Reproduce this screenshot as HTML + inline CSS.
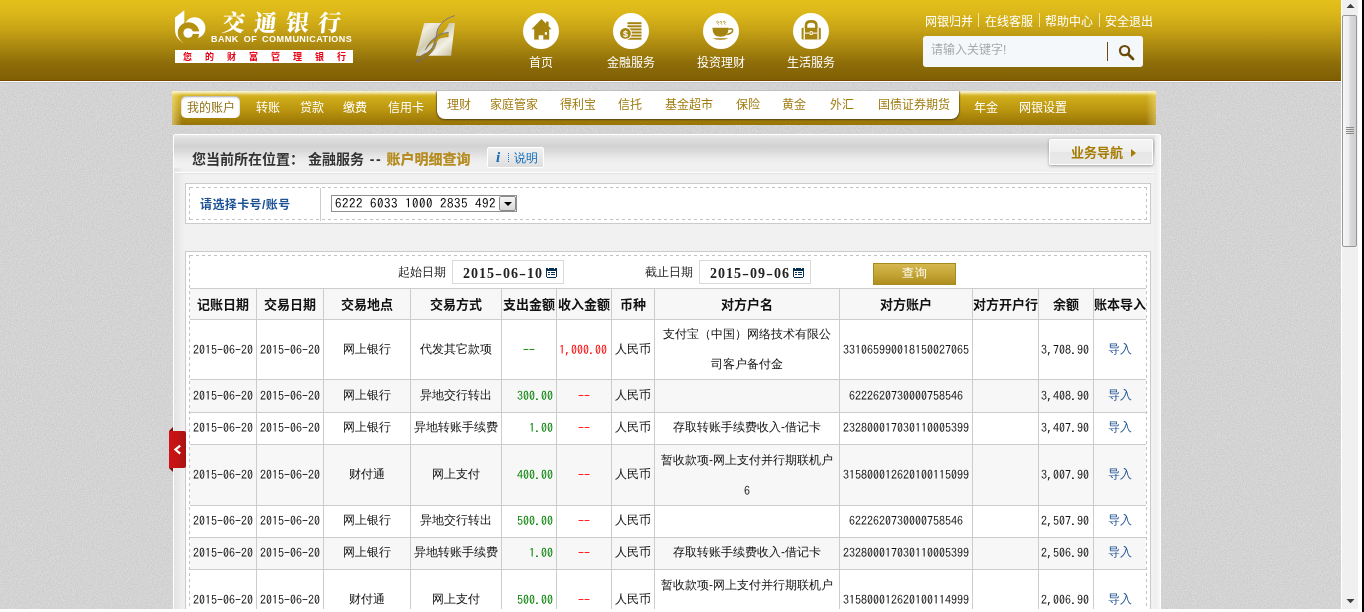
<!DOCTYPE html>
<html lang="zh-CN">
<head>
<meta charset="utf-8">
<title>交通银行 - 账户明细查询</title>
<style>
*{box-sizing:border-box;margin:0;padding:0}
html,body{width:1364px;height:612px;overflow:hidden;background:#fff}
body{position:relative;font-family:"Liberation Sans","Noto Sans CJK SC",sans-serif;font-size:12px;color:#000}
.abs{position:absolute}
#page{position:absolute;left:0;top:0;width:1341px;height:609px;overflow:hidden;background:#d3d3d3;will-change:transform}
/* header */
#hdr{position:absolute;left:0;top:0;width:1341px;height:81px;background:linear-gradient(#e3c01a 0,#dcb81a 12px,#c9a516 28px,#a8860f 48px,#8d6c09 64px,#7e5f03 80px,#734a00 80px,#734a00 81px)}
#hdrline{position:absolute;left:0;top:81px;width:1341px;height:2px;background:linear-gradient(#fff 0,#fff 1px,#c6c6c6 1px,#c6c6c6 2px)}
.yh{font-family:"Liberation Sans","Noto Sans CJK SC",sans-serif}
.ss{font-family:"Liberation Sans","WenQuanYi Zen Hei","Noto Sans CJK SC",sans-serif}
.t{position:absolute;white-space:nowrap;line-height:14px;height:14px}
.w{color:#fff}

/* logo */
#logotxt{position:absolute;left:222px;top:8px;font-family:"Liberation Serif","Noto Serif CJK SC",serif;font-weight:900;font-size:23px;line-height:32px;letter-spacing:9px;color:#fff;white-space:nowrap;transform:skewX(-6deg)}
#logoen{position:absolute;left:211px;top:34px;font-family:"Liberation Sans",sans-serif;font-weight:bold;font-size:9px;line-height:10px;color:#fff;white-space:nowrap;letter-spacing:0.45px;word-spacing:2px}
#slogan{position:absolute;left:175px;top:50px;width:178px;height:13px;background:#fff;color:#e60012;font-size:9px;line-height:15px;font-weight:bold;white-space:nowrap;letter-spacing:13px;padding-left:8px;overflow:hidden}
.circ{position:absolute;top:13px;width:36px;height:36px;border-radius:50%;background:#fff}
.circ svg{position:absolute;left:0;top:0}
.navl{position:absolute;top:56px;width:90px;text-align:center;color:#fff;font-size:12px;line-height:14px;white-space:nowrap}
.tl{position:absolute;top:15px;color:#fff;font-size:12px;line-height:14px;white-space:nowrap}
.tsep{position:absolute;top:13px;width:1px;height:14px;background:#f3e6a6}
#search{position:absolute;left:923px;top:36px;width:220px;height:31px;border-radius:3px;background:#f4f8fb}
#search .ph{position:absolute;left:8px;top:7px;color:#a9a9a9;font-size:12px;line-height:14px}
#search .bar{position:absolute;left:184px;top:6px;width:1px;height:19px;background:#6b4a0a}

/* subnav */
#snav{position:absolute;left:172px;top:91px;width:984px;height:34px;background:linear-gradient(#f7f0d0 0,#f5ecc2 1px,#efe09c 2px,#e3cc60 3px,#d8bb34 4px,#cead1a 6px,#cba717 9px,#b8930f 20px,#a07c08 30px,#97740a 34px);}
#snav .fadeL{position:absolute;left:0;top:0;width:10px;height:34px;background:linear-gradient(90deg,rgba(255,240,170,.55),rgba(255,240,170,0))}
#snav .fadeR{position:absolute;right:0;top:0;width:10px;height:34px;background:linear-gradient(270deg,rgba(255,240,170,.45),rgba(255,240,170,0))}
#pill{position:absolute;left:9px;top:5px;width:59px;height:22px;border-radius:5px;background:#fff;box-shadow:inset 0 1px 2px rgba(0,0,0,.35)}
#wtab{position:absolute;left:265px;top:0;width:522px;height:28px;background:#fff;border-radius:0 0 8px 8px;box-shadow:0 1px 2px rgba(60,50,20,.75),-1px 0 1px rgba(60,50,20,.35),1px 0 1px rgba(60,50,20,.35)}
.sn{position:absolute;top:10px;font-size:12px;line-height:14px;white-space:nowrap;color:#fff}
.sg{position:absolute;top:7px;font-size:12px;line-height:14px;white-space:nowrap;color:#a07c10}

/* panel */
#panel{position:absolute;left:173px;top:134px;width:988px;height:500px;border:1px solid #fff;border-radius:2px 2px 0 0;background:#f1f1f1;overflow:hidden}
#phead{position:absolute;left:0;top:0;width:986px;height:37px;background:linear-gradient(#e9e9e9 0,#dedede 4px,#d2d2d2 11px,#dcdcdc 17px,#ebebeb 24px,#f0f0f0 30px,#f0f0f0 37px)}
#pl{position:absolute;left:0;top:33px;width:11px;height:470px;background:linear-gradient(90deg,#e3e3e3,#f1f1f1)}
#pr{position:absolute;right:0;top:0;width:5px;height:500px;background:linear-gradient(90deg,#ececec,#f8f8f8)}
#pline{position:absolute;left:1px;top:37px;width:980px;height:2px;background:linear-gradient(#fff 0,#fff 50%,#e2e2e2 50%,#e2e2e2 100%)}
#crumb{position:absolute;left:18px;top:16px;font-size:14px;line-height:16px;font-weight:bold;color:#333;white-space:nowrap}
#crumb b{color:#b58d22}
#crumb s{text-decoration:none;letter-spacing:1.5px;margin:0 0.5px 0 2px}
#tip{position:absolute;left:313px;top:12px;width:57px;height:21px;border:1px solid #fff;border-radius:2px;background:linear-gradient(#f1f1f1,#dedede)}
#bnav{position:absolute;left:875px;top:4px;width:104px;height:26px;border:1px solid #fff;border-radius:2px;background:linear-gradient(#f5f5f5 0,#efefef 50%,#e6e6e6 51%,#e9e9e9 100%);box-shadow:0 1px 3px rgba(0,0,0,.35)}
#bnav span{position:absolute;left:21px;top:5px;font-size:13px;line-height:15px;font-weight:bold;color:#a67c00;white-space:nowrap}
#bnav i{position:absolute;left:81px;top:9px;width:0;height:0;border-left:5px solid #a67c00;border-top:4px solid transparent;border-bottom:4px solid transparent}
.box{position:absolute;left:11px;width:966px;border:1px solid #cbcbcb;background:#fff}
.dash{position:absolute;left:3px;top:3px;border:1px solid transparent;box-sizing:border-box}
.dash:before{content:"";position:absolute;left:-1px;top:-1px;right:-1px;bottom:-1px;
background:linear-gradient(90deg,#c2c2c2 3px,transparent 3px) 1px 0/6px 1px repeat-x,
linear-gradient(90deg,#c2c2c2 3px,transparent 3px) 1px 100%/6px 1px repeat-x,
linear-gradient(180deg,#c2c2c2 3px,transparent 3px) 0 0/1px 6px repeat-y,
linear-gradient(180deg,#c2c2c2 3px,transparent 3px) 100% 0/1px 6px repeat-y}

.ssf{font-family:"Liberation Sans","WenQuanYi Zen Hei","Noto Sans CJK SC",sans-serif}
.num{font-family:"IPAGothic","Liberation Mono",monospace}
#b1lab{position:absolute;left:14px;top:14px;font-size:12px;line-height:14px;font-weight:bold;color:#1d5394;white-space:nowrap;letter-spacing:.4px}
#b1div{position:absolute;left:134px;top:4px;width:1px;height:33px;background:#ccc}
#sel{position:absolute;left:145px;top:11px;width:186px;height:17px;border:1px solid #8f8f8f;background:#fff}
#sel span{position:absolute;left:3px;top:0;font-size:13px;letter-spacing:.5px;line-height:16px;white-space:pre;color:#000}
#sel i{position:absolute;right:0;top:0;width:17px;height:15px;border:1px solid #8a8a8a;border-radius:2px;background:linear-gradient(#f6f6f6,#d8d8d8)}
#sel i:after{content:"";position:absolute;left:3.5px;top:5px;border-top:4px solid #000;border-left:4px solid transparent;border-right:4px solid transparent}
/* query area */
.ql{position:absolute;top:13px;font-size:12px;line-height:14px;white-space:nowrap;color:#222}
.qd{position:absolute;top:8px;width:112px;height:24px;border:1px solid #d9d9d9;background:#fff}
.qd span{position:absolute;left:10px;top:5px;font-family:"Liberation Serif",serif;font-weight:bold;font-size:14px;line-height:16px;letter-spacing:1px;color:#222;white-space:nowrap}
.qd u{display:inline-block;text-decoration:none;width:7px;text-align:center;transform:scaleX(1.5);letter-spacing:0;margin-right:1px}
.qd svg{position:absolute;left:93px;top:7px}
#qbtn{position:absolute;left:687px;top:11px;width:83px;height:22px;border:1px solid #a88a1c;background:linear-gradient(#d5b750 0,#c4a535 50%,#ad8e1e 100%);color:#fff;font-size:12px;line-height:19px;text-align:center;letter-spacing:1px;padding-left:1px;font-family:"Liberation Sans","WenQuanYi Zen Hei",sans-serif}
/* table */
#tb{position:absolute;left:4px;top:36px;width:956px;height:360px;font-size:12px;overflow:hidden}
#tb .hl{position:absolute;left:0;width:956px;height:1px;background:#ccc}
#tb .vl{position:absolute;top:0;width:1px;height:360px;background:#ccc}
#tb .bg{position:absolute;left:0;width:956px;background:#f7f7f7}
#tb .c{position:absolute;margin-top:-1px;text-align:center;white-space:nowrap;line-height:30px;color:#111}
#tb .h{font-family:"Liberation Sans","Noto Sans CJK SC",sans-serif;font-weight:bold;font-size:13px;color:#111;line-height:31px;margin-top:0}
#tb .g{color:#008000}#tb .r{color:#ff0000}#tb .a{color:#1c4f91}

#rtab{position:absolute;left:169px;top:431px;width:17px;height:37px;background:linear-gradient(90deg,#cf1212,#c11313 50%,#a51515);border-radius:0 2px 2px 0}
#rtabt{position:absolute;left:169px;top:427px;width:0;height:0;border-bottom:4px solid #7e0c0c;border-left:4px solid transparent}
#rtabb{position:absolute;left:169px;top:468px;width:0;height:0;border-top:4px solid #7e0c0c;border-left:4px solid transparent}
#tip b{position:absolute;left:8px;top:1px;font-family:"Liberation Serif",serif;font-style:italic;font-weight:bold;font-size:15px;line-height:17px;color:#1268b3}
#tip i{position:absolute;left:19.5px;top:5px;width:1px;height:10px;background:repeating-linear-gradient(#1a78c8 0,#1a78c8 1px,transparent 1px,transparent 2px)}
#tip span{position:absolute;left:26px;top:3px;font-size:12px;line-height:14px;color:#0b6bbb;white-space:nowrap}
/* scrollbar */
#sb{position:absolute;left:1341px;top:0;width:23px;height:612px;background:#fff}
#sbtrack{position:absolute;left:1px;top:0;width:16px;height:609px;background:#f0f0f0}
#sbthumb{position:absolute;left:1px;top:15px;width:15px;height:232px;border:1px solid #979797;border-radius:2px;background:linear-gradient(90deg,#f6f6f6 0,#ededee 45%,#d9d9dc 55%,#cfcfd3 100%)}
#sbblack{position:absolute;left:21px;top:0;width:2px;height:612px;background:#000}
</style>
</head>
<body>
<div id="page">
  <div id="hdr"></div>
  <div id="hdrline"></div>

  <svg class="abs" style="left:0;top:83px" width="1341" height="526"><filter id="nz" x="0" y="0" width="100%" height="100%" color-interpolation-filters="sRGB"><feTurbulence type="fractalNoise" baseFrequency="0.8" numOctaves="2" seed="3"/><feColorMatrix type="matrix" values="0.11 0 0 0 0.773  0.11 0 0 0 0.773  0.11 0 0 0 0.773  0 0 0 0 1"/></filter><rect width="1341" height="526" filter="url(#nz)"/></svg>
  <!-- logo -->
  <svg class="abs" style="left:172px;top:8px" width="36" height="36" viewBox="0 0 36 36">
    <path d="M3,9.6 L12.3,2.2 L12.3,15 L6,26 L11.2,34.8 Q3,30.5 3,22 Z" fill="#fff"/>
    <circle cx="22.7" cy="20" r="10.7" fill="#fff"/>
    <path d="M5.7,25 A10.8,10.8 0 0 1 27.3,25 A10.8,10.8 0 0 1 24.5,32.3 L11.2,34.8 Q5.7,31 5.7,25 Z" fill="#b3910f"/>
    <circle cx="16.2" cy="25" r="4.8" fill="#fff"/>
    <rect x="18" y="23.4" width="10" height="2.6" fill="#fff"/>
  </svg>
  <div id="logotxt">交通银行</div>
  <div id="logoen">BANK OF COMMUNICATIONS</div>
  <div id="slogan">您的财富管理银行</div>
  <!-- centre emblem -->
  <svg class="abs" style="left:408px;top:8px" width="60" height="60" viewBox="0 0 60 60">
    <defs>
      <linearGradient id="sg" x1="0" y1="0" x2="1" y2="1">
        <stop offset="0" stop-color="#cfc8a8"/><stop offset="0.22" stop-color="#f1eedf"/><stop offset="0.45" stop-color="#d2ccb0"/><stop offset="0.7" stop-color="#f3f1e4"/><stop offset="1" stop-color="#bdb591"/></linearGradient>
      <mask id="sm"><rect width="60" height="60" fill="#fff"/>
        <path d="M46.6,7.6 C45.17,8.25 40.37,9.98 38,11.5 C35.63,13.02 33.83,14.95 32.4,16.7 C30.97,18.45 30.07,20.20 29.4,22 C28.73,23.80 28.88,25.58 28.4,27.5 C27.92,29.42 27.15,31.55 26.5,33.5 C25.85,35.45 25.58,37.45 24.5,39.2 C23.42,40.95 21.80,42.62 20,44 C18.20,45.38 15.73,45.83 13.7,47.5 C11.67,49.17 8.78,52.92 7.8,54 L7.8,54.4 C9.00,53.87 12.72,52.52 15,51.2 C17.28,49.88 19.67,48.20 21.5,46.5 C23.33,44.80 24.83,42.92 26,41 C27.17,39.08 27.58,36.87 28.5,35 C29.42,33.13 30.33,31.63 31.5,29.8 C32.67,27.97 34.25,25.70 35.5,24 C36.75,22.30 38.00,21.18 39,19.6 C40.00,18.02 40.23,16.40 41.5,14.5 C42.77,12.60 45.75,9.25 46.6,8.2 Z" fill="#000"/>
        <path d="M40.7,24.3 C39.42,24.58 35.20,25.13 33,26 C30.80,26.87 29.40,28.07 27.5,29.5 C25.60,30.93 23.32,32.48 21.6,34.6 C19.88,36.72 17.93,40.93 17.2,42.2 L17.2,42.2 C18.05,41.27 20.58,38.17 22.3,36.6 C24.02,35.03 25.63,33.90 27.5,32.8 C29.37,31.70 31.33,30.65 33.5,30 C35.67,29.35 39.33,29.08 40.5,28.9 Z" fill="#000"/>
      </mask>
    </defs>
    <path d="M16.2,14.9 L46.9,14.9 L43.1,47.8 L7.8,47.8 Z" fill="url(#sg)" mask="url(#sm)"/>
    <g fill="none" stroke="#62659c" stroke-width="0.8">
      <path d="M46.6,7.6 C45.17,8.25 40.37,9.98 38,11.5 C35.63,13.02 33.83,14.95 32.4,16.7 C30.97,18.45 30.07,20.20 29.4,22 C28.73,23.80 28.88,25.58 28.4,27.5 C27.92,29.42 27.15,31.55 26.5,33.5 C25.85,35.45 25.58,37.45 24.5,39.2 C23.42,40.95 21.80,42.62 20,44 C18.20,45.38 15.73,45.83 13.7,47.5 C11.67,49.17 8.78,52.92 7.8,54"/>
      <path d="M40.7,24.3 C39.42,24.58 35.20,25.13 33,26 C30.80,26.87 29.40,28.07 27.5,29.5 C25.60,30.93 23.32,32.48 21.6,34.6 C19.88,36.72 17.93,40.93 17.2,42.2"/>
      <path d="M7.8,54.4 C9.00,53.87 12.72,52.52 15,51.2 C17.28,49.88 19.67,48.20 21.5,46.5 C23.33,44.80 24.83,42.92 26,41 C27.17,39.08 28.08,36.00 28.5,35" stroke-width="0.6"/>
    </g>
  </svg>
  <!-- main nav icons -->
  <div class="circ" style="left:523px"><svg width="36" height="36" viewBox="0 0 36 36"><g fill="#a5840f"><path d="M18.5,6 L28.6,16.2 L8.4,16.2 Z"/><rect x="23" y="8.6" width="2.6" height="5"/><rect x="11.2" y="16" width="15" height="10.6"/></g><rect x="15.7" y="22.3" width="4.6" height="4.5" fill="#fff"/><rect x="21.8" y="19.2" width="2.2" height="2.5" fill="#fff"/></svg></div>
  <div class="circ" style="left:613px"><svg width="36" height="36" viewBox="0 0 36 36"><g fill="#a5840f"><rect x="14.5" y="9.2" width="14" height="2"/><rect x="14.5" y="12.3" width="14" height="2"/><rect x="14.5" y="15.4" width="14" height="2"/><rect x="14.5" y="18.5" width="14" height="2"/><rect x="14.5" y="21.6" width="14" height="2"/><rect x="14.5" y="24.7" width="14" height="2"/></g><circle cx="12.4" cy="20.4" r="6.4" fill="#fff"/><circle cx="12.4" cy="20.4" r="5.4" fill="#a5840f"/><text x="12.4" y="23.6" font-family="Liberation Sans,sans-serif" font-size="9" font-weight="bold" fill="#fff" text-anchor="middle">$</text></svg></div>
  <div class="circ" style="left:703px"><svg width="36" height="36" viewBox="0 0 36 36"><g fill="#a5840f"><path d="M9.4,14.8 L25.6,14.8 Q25.6,23.8 17.5,23.8 Q9.4,23.8 9.4,14.8 Z"/><path d="M9.5,25.2 L25.5,25.2 Q22,26.8 17.5,26.8 Q13,26.8 9.5,25.2 Z"/></g><path d="M25.2,16.2 Q30.4,15 29.6,18 Q28.8,20.6 23.6,21.6" fill="none" stroke="#a5840f" stroke-width="1.5"/><path d="M13.2,9 q1.4,-1.4 2.4,0 q-2,1.6 0,2.6 M16.6,9 q1.4,-1.4 2.4,0 q-2,1.6 0,2.6 M20,9 q1.4,-1.4 2.4,0 q-2,1.6 0,2.6" fill="none" stroke="#a5840f" stroke-width="0.8"/></svg></div>
  <div class="circ" style="left:793px"><svg width="36" height="36" viewBox="0 0 36 36"><path d="M13,15 L13,12.4 Q13,8.4 18.2,8.4 Q23.4,8.4 23.4,12.4 L23.4,15" fill="none" stroke="#a5840f" stroke-width="2.6"/><rect x="8.6" y="14.8" width="19.2" height="11.8" rx="1" fill="#a5840f"/><rect x="10.6" y="14.8" width="1.3" height="11.8" fill="#fff"/><rect x="24.4" y="14.8" width="1.3" height="11.8" fill="#fff"/><rect x="12" y="19.6" width="12.4" height="1" fill="#fff"/><rect x="16.8" y="18.2" width="2.8" height="3.8" fill="#fff"/><rect x="17.6" y="19" width="1.2" height="2.2" fill="#a5840f"/></svg></div>
  <div class="navl" style="left:496px">首页</div>
  <div class="navl" style="left:586px">金融服务</div>
  <div class="navl" style="left:676px">投资理财</div>
  <div class="navl" style="left:766px">生活服务</div>
  <!-- top links -->
  <div class="tl" style="left:925px">网银归并</div><div class="tsep" style="left:978px"></div>
  <div class="tl" style="left:985px">在线客服</div><div class="tsep" style="left:1039px"></div>
  <div class="tl" style="left:1045px">帮助中心</div><div class="tsep" style="left:1099px"></div>
  <div class="tl" style="left:1105px">安全退出</div>
  <div id="search"><div class="ph">请输入关键字!</div><div class="bar"></div>
    <svg class="abs" style="left:195px;top:8px" width="17" height="17" viewBox="0 0 17 17"><circle cx="6.6" cy="6.6" r="4.6" fill="none" stroke="#6b4a0a" stroke-width="2.2"/><path d="M10,10 L15,15" stroke="#6b4a0a" stroke-width="2.8" stroke-linecap="round"/></svg>
  </div>

  <!-- sub navigation -->
  <div id="snav"><div class="fadeL"></div><div class="fadeR"></div>
    <div id="pill"></div>
    <div class="sn" style="left:15px;color:#8f7012">我的账户</div>
    <div class="sn" style="left:84px">转账</div>
    <div class="sn" style="left:128px">贷款</div>
    <div class="sn" style="left:171px">缴费</div>
    <div class="sn" style="left:216px">信用卡</div>
    <div id="wtab"></div>
    <div class="sg" style="left:275px">理财</div>
    <div class="sg" style="left:318px">家庭管家</div>
    <div class="sg" style="left:388px">得利宝</div>
    <div class="sg" style="left:446px">信托</div>
    <div class="sg" style="left:493px">基金超市</div>
    <div class="sg" style="left:564px">保险</div>
    <div class="sg" style="left:610px">黄金</div>
    <div class="sg" style="left:658px">外汇</div>
    <div class="sg" style="left:706px">国债证券期货</div>
    <div class="sn" style="left:802px">年金</div>
    <div class="sn" style="left:847px">网银设置</div>
  </div>

  <!-- content panel -->
  <div id="panel">
    <div id="phead"></div><div id="pl"></div><div id="pr"></div><div id="pline"></div>
    <div id="crumb">您当前所在位置： 金融服务 <s>--</s> <b>账户明细查询</b></div>
    <div id="tip"><b>i</b><i></i><span class="ssf">说明</span></div>
    <div id="bnav"><span>业务导航</span><i></i></div>
    <div class="box" id="box1" style="top:48px;height:41px"><div class="dash" style="width:958px;height:33px"></div>
      <div id="b1lab">请选择卡号/账号</div><div id="b1div"></div>
      <div id="sel"><span class="num">6222 6033 1000 2835 492</span><i></i></div>
    </div>
    <div class="box" id="box2" style="top:116px;height:400px"><div class="dash" style="width:958px;height:400px"></div>
      <div class="ql ssf" style="left:212px">起始日期</div>
      <div class="qd" style="left:266px"><span>2015<u>-</u>06<u>-</u>10</span><svg width="11" height="10" viewBox="0 0 11 10" shape-rendering="crispEdges"><rect width="11" height="9" fill="#06304f"/><rect x="1" y="9" width="9" height="1" fill="#06304f"/><rect x="1" y="3" width="9" height="6" fill="#fff"/><rect x="2" y="0" width="1" height="1" fill="#fff"/><rect x="8" y="0" width="1" height="1" fill="#fff"/><g fill="#06304f"><rect x="2" y="4" width="2" height="1"/><rect x="5" y="4" width="4" height="1"/><rect x="2" y="6" width="2" height="1"/><rect x="5" y="6" width="4" height="1"/></g></svg></div>
      <div class="ql ssf" style="left:459px">截止日期</div>
      <div class="qd" style="left:513px"><span>2015<u>-</u>09<u>-</u>06</span><svg width="11" height="10" viewBox="0 0 11 10" shape-rendering="crispEdges"><rect width="11" height="9" fill="#06304f"/><rect x="1" y="9" width="9" height="1" fill="#06304f"/><rect x="1" y="3" width="9" height="6" fill="#fff"/><rect x="2" y="0" width="1" height="1" fill="#fff"/><rect x="8" y="0" width="1" height="1" fill="#fff"/><g fill="#06304f"><rect x="2" y="4" width="2" height="1"/><rect x="5" y="4" width="4" height="1"/><rect x="2" y="6" width="2" height="1"/><rect x="5" y="6" width="4" height="1"/></g></svg></div>
      <div id="qbtn">查询</div>
      <div id="tb">
      <div class="bg" style="top:1px;height:30px"></div>
      <div class="bg" style="top:92px;height:32px"></div>
      <div class="bg" style="top:157px;height:60px"></div>
      <div class="bg" style="top:250px;height:31px"></div>
      <div class="hl" style="top:0px"></div>
      <div class="hl" style="top:31px"></div>
      <div class="hl" style="top:91px"></div>
      <div class="hl" style="top:124px"></div>
      <div class="hl" style="top:156px"></div>
      <div class="hl" style="top:217px"></div>
      <div class="hl" style="top:249px"></div>
      <div class="hl" style="top:281px"></div>
      <div class="hl" style="top:342px"></div>
      <div class="vl" style="left:66px"></div>
      <div class="vl" style="left:133px"></div>
      <div class="vl" style="left:220px"></div>
      <div class="vl" style="left:311px"></div>
      <div class="vl" style="left:366px"></div>
      <div class="vl" style="left:421px"></div>
      <div class="vl" style="left:464px"></div>
      <div class="vl" style="left:649px"></div>
      <div class="vl" style="left:782px"></div>
      <div class="vl" style="left:848px"></div>
      <div class="vl" style="left:903px"></div>
      <div class="c h" style="left:0px;top:1px;width:66px;height:30px;">记账日期</div>
      <div class="c h" style="left:67px;top:1px;width:66px;height:30px;">交易日期</div>
      <div class="c h" style="left:134px;top:1px;width:86px;height:30px;">交易地点</div>
      <div class="c h" style="left:221px;top:1px;width:90px;height:30px;">交易方式</div>
      <div class="c h" style="left:312px;top:1px;width:54px;height:30px;">支出金额</div>
      <div class="c h" style="left:367px;top:1px;width:54px;height:30px;">收入金额</div>
      <div class="c h" style="left:422px;top:1px;width:42px;height:30px;">币种</div>
      <div class="c h" style="left:465px;top:1px;width:184px;height:30px;">对方户名</div>
      <div class="c h" style="left:650px;top:1px;width:132px;height:30px;">对方账户</div>
      <div class="c h" style="left:783px;top:1px;width:65px;height:30px;">对方开户行</div>
      <div class="c h" style="left:849px;top:1px;width:54px;height:30px;">余额</div>
      <div class="c h" style="left:904px;top:1px;width:52px;height:30px;">账本导入</div>
      <div class="c num" style="left:0px;top:32px;width:66px;height:60px;line-height:60px;">2015-06-20</div>
      <div class="c num" style="left:67px;top:32px;width:66px;height:60px;line-height:60px;">2015-06-20</div>
      <div class="c ssf" style="left:134px;top:32px;width:86px;height:60px;line-height:60px;">网上银行</div>
      <div class="c ssf" style="left:221px;top:32px;width:90px;height:60px;line-height:60px;">代发其它款项</div>
      <div class="c num g" style="left:312px;top:32px;width:54px;height:60px;line-height:60px;">--</div>
      <div class="c num r" style="left:367px;top:32px;width:54px;height:60px;line-height:60px;text-align:right;padding-right:4px;">1,000.00</div>
      <div class="c ssf" style="left:422px;top:32px;width:42px;height:60px;line-height:60px;">人民币</div>
      <div class="c ssf" style="left:465px;top:32px;width:184px;height:30px;">支付宝（中国）网络技术有限公</div>
      <div class="c ssf" style="left:465px;top:62px;width:184px;height:30px;">司客户备付金</div>
      <div class="c num" style="left:650px;top:32px;width:132px;height:60px;line-height:60px;">331065990018150027065</div>
      <div class="c num" style="left:849px;top:32px;width:54px;height:60px;line-height:60px;text-align:right;padding-right:4px;">3,708.90</div>
      <div class="c ssf a" style="left:904px;top:32px;width:52px;height:60px;line-height:60px;">导入</div>
      <div class="c num" style="left:0px;top:93px;width:66px;height:31px;line-height:31px;">2015-06-20</div>
      <div class="c num" style="left:67px;top:93px;width:66px;height:31px;line-height:31px;">2015-06-20</div>
      <div class="c ssf" style="left:134px;top:93px;width:86px;height:31px;line-height:31px;">网上银行</div>
      <div class="c ssf" style="left:221px;top:93px;width:90px;height:31px;line-height:31px;">异地交行转出</div>
      <div class="c num g" style="left:312px;top:93px;width:54px;height:31px;line-height:31px;text-align:right;padding-right:3px;">300.00</div>
      <div class="c num r" style="left:367px;top:93px;width:54px;height:31px;line-height:31px;">--</div>
      <div class="c ssf" style="left:422px;top:93px;width:42px;height:31px;line-height:31px;">人民币</div>
      <div class="c ssf" style="left:465px;top:93px;width:184px;height:31px;line-height:31px;"></div>
      <div class="c num" style="left:650px;top:93px;width:132px;height:31px;line-height:31px;">6222620730000758546</div>
      <div class="c num" style="left:849px;top:93px;width:54px;height:31px;line-height:31px;text-align:right;padding-right:4px;">3,408.90</div>
      <div class="c ssf a" style="left:904px;top:93px;width:52px;height:31px;line-height:31px;">导入</div>
      <div class="c num" style="left:0px;top:125px;width:66px;height:31px;line-height:31px;">2015-06-20</div>
      <div class="c num" style="left:67px;top:125px;width:66px;height:31px;line-height:31px;">2015-06-20</div>
      <div class="c ssf" style="left:134px;top:125px;width:86px;height:31px;line-height:31px;">网上银行</div>
      <div class="c ssf" style="left:221px;top:125px;width:90px;height:31px;line-height:31px;">异地转账手续费</div>
      <div class="c num g" style="left:312px;top:125px;width:54px;height:31px;line-height:31px;text-align:right;padding-right:3px;">1.00</div>
      <div class="c num r" style="left:367px;top:125px;width:54px;height:31px;line-height:31px;">--</div>
      <div class="c ssf" style="left:422px;top:125px;width:42px;height:31px;line-height:31px;">人民币</div>
      <div class="c ssf" style="left:465px;top:125px;width:184px;height:31px;line-height:31px;">存取转账手续费收入-借记卡</div>
      <div class="c num" style="left:650px;top:125px;width:132px;height:31px;line-height:31px;">232800017030110005399</div>
      <div class="c num" style="left:849px;top:125px;width:54px;height:31px;line-height:31px;text-align:right;padding-right:4px;">3,407.90</div>
      <div class="c ssf a" style="left:904px;top:125px;width:52px;height:31px;line-height:31px;">导入</div>
      <div class="c num" style="left:0px;top:157px;width:66px;height:60px;line-height:60px;">2015-06-20</div>
      <div class="c num" style="left:67px;top:157px;width:66px;height:60px;line-height:60px;">2015-06-20</div>
      <div class="c ssf" style="left:134px;top:157px;width:86px;height:60px;line-height:60px;">财付通</div>
      <div class="c ssf" style="left:221px;top:157px;width:90px;height:60px;line-height:60px;">网上支付</div>
      <div class="c num g" style="left:312px;top:157px;width:54px;height:60px;line-height:60px;text-align:right;padding-right:3px;">400.00</div>
      <div class="c num r" style="left:367px;top:157px;width:54px;height:60px;line-height:60px;">--</div>
      <div class="c ssf" style="left:422px;top:157px;width:42px;height:60px;line-height:60px;">人民币</div>
      <div class="c ssf" style="left:465px;top:158px;width:184px;height:30px;">暂收款项-网上支付并行期联机户</div>
      <div class="c num" style="left:465px;top:188px;width:184px;height:30px;">6</div>
      <div class="c num" style="left:650px;top:157px;width:132px;height:60px;line-height:60px;">315800012620100115099</div>
      <div class="c num" style="left:849px;top:157px;width:54px;height:60px;line-height:60px;text-align:right;padding-right:4px;">3,007.90</div>
      <div class="c ssf a" style="left:904px;top:157px;width:52px;height:60px;line-height:60px;">导入</div>
      <div class="c num" style="left:0px;top:218px;width:66px;height:31px;line-height:31px;">2015-06-20</div>
      <div class="c num" style="left:67px;top:218px;width:66px;height:31px;line-height:31px;">2015-06-20</div>
      <div class="c ssf" style="left:134px;top:218px;width:86px;height:31px;line-height:31px;">网上银行</div>
      <div class="c ssf" style="left:221px;top:218px;width:90px;height:31px;line-height:31px;">异地交行转出</div>
      <div class="c num g" style="left:312px;top:218px;width:54px;height:31px;line-height:31px;text-align:right;padding-right:3px;">500.00</div>
      <div class="c num r" style="left:367px;top:218px;width:54px;height:31px;line-height:31px;">--</div>
      <div class="c ssf" style="left:422px;top:218px;width:42px;height:31px;line-height:31px;">人民币</div>
      <div class="c ssf" style="left:465px;top:218px;width:184px;height:31px;line-height:31px;"></div>
      <div class="c num" style="left:650px;top:218px;width:132px;height:31px;line-height:31px;">6222620730000758546</div>
      <div class="c num" style="left:849px;top:218px;width:54px;height:31px;line-height:31px;text-align:right;padding-right:4px;">2,507.90</div>
      <div class="c ssf a" style="left:904px;top:218px;width:52px;height:31px;line-height:31px;">导入</div>
      <div class="c num" style="left:0px;top:250px;width:66px;height:31px;line-height:31px;">2015-06-20</div>
      <div class="c num" style="left:67px;top:250px;width:66px;height:31px;line-height:31px;">2015-06-20</div>
      <div class="c ssf" style="left:134px;top:250px;width:86px;height:31px;line-height:31px;">网上银行</div>
      <div class="c ssf" style="left:221px;top:250px;width:90px;height:31px;line-height:31px;">异地转账手续费</div>
      <div class="c num g" style="left:312px;top:250px;width:54px;height:31px;line-height:31px;text-align:right;padding-right:3px;">1.00</div>
      <div class="c num r" style="left:367px;top:250px;width:54px;height:31px;line-height:31px;">--</div>
      <div class="c ssf" style="left:422px;top:250px;width:42px;height:31px;line-height:31px;">人民币</div>
      <div class="c ssf" style="left:465px;top:250px;width:184px;height:31px;line-height:31px;">存取转账手续费收入-借记卡</div>
      <div class="c num" style="left:650px;top:250px;width:132px;height:31px;line-height:31px;">232800017030110005399</div>
      <div class="c num" style="left:849px;top:250px;width:54px;height:31px;line-height:31px;text-align:right;padding-right:4px;">2,506.90</div>
      <div class="c ssf a" style="left:904px;top:250px;width:52px;height:31px;line-height:31px;">导入</div>
      <div class="c num" style="left:0px;top:282px;width:66px;height:60px;line-height:60px;">2015-06-20</div>
      <div class="c num" style="left:67px;top:282px;width:66px;height:60px;line-height:60px;">2015-06-20</div>
      <div class="c ssf" style="left:134px;top:282px;width:86px;height:60px;line-height:60px;">财付通</div>
      <div class="c ssf" style="left:221px;top:282px;width:90px;height:60px;line-height:60px;">网上支付</div>
      <div class="c num g" style="left:312px;top:282px;width:54px;height:60px;line-height:60px;text-align:right;padding-right:3px;">500.00</div>
      <div class="c num r" style="left:367px;top:282px;width:54px;height:60px;line-height:60px;">--</div>
      <div class="c ssf" style="left:422px;top:282px;width:42px;height:60px;line-height:60px;">人民币</div>
      <div class="c ssf" style="left:465px;top:283px;width:184px;height:30px;">暂收款项-网上支付并行期联机户</div>
      <div class="c num" style="left:465px;top:313px;width:184px;height:30px;">5</div>
      <div class="c num" style="left:650px;top:282px;width:132px;height:60px;line-height:60px;">315800012620100114999</div>
      <div class="c num" style="left:849px;top:282px;width:54px;height:60px;line-height:60px;text-align:right;padding-right:4px;">2,006.90</div>
      <div class="c ssf a" style="left:904px;top:282px;width:52px;height:60px;line-height:60px;">导入</div>
      </div>
    </div>
  </div>
  <div id="rtabt"></div><div id="rtabb"></div>
  <div id="rtab"><svg width="17" height="37" viewBox="0 0 17 37"><path d="M11.2,14.6 L6.4,18.6 L11.2,22.6" fill="none" stroke="#fff" stroke-width="2.2"/></svg></div>
</div>
<div id="sb">
  <div id="sbtrack"></div>
  <div id="sbthumb"></div>
  <div id="sbblack"></div>
  <svg class="abs" style="left:5px;top:3px" width="9" height="6" viewBox="0 0 9 6"><path d="M0.5,5 L4.5,0.8 L8.5,5 Z" fill="#404040"/></svg>
  <svg class="abs" style="left:5px;top:598px" width="9" height="6" viewBox="0 0 9 6"><path d="M0.5,1 L4.5,5.2 L8.5,1 Z" fill="#404040"/></svg>
  <div class="abs" style="left:5px;top:127px;width:8px;height:1px;background:#8a8a8a;box-shadow:0 2px 0 #8a8a8a,0 4px 0 #8a8a8a,0 6px 0 #8a8a8a"></div>
</div>
</body>
</html>
